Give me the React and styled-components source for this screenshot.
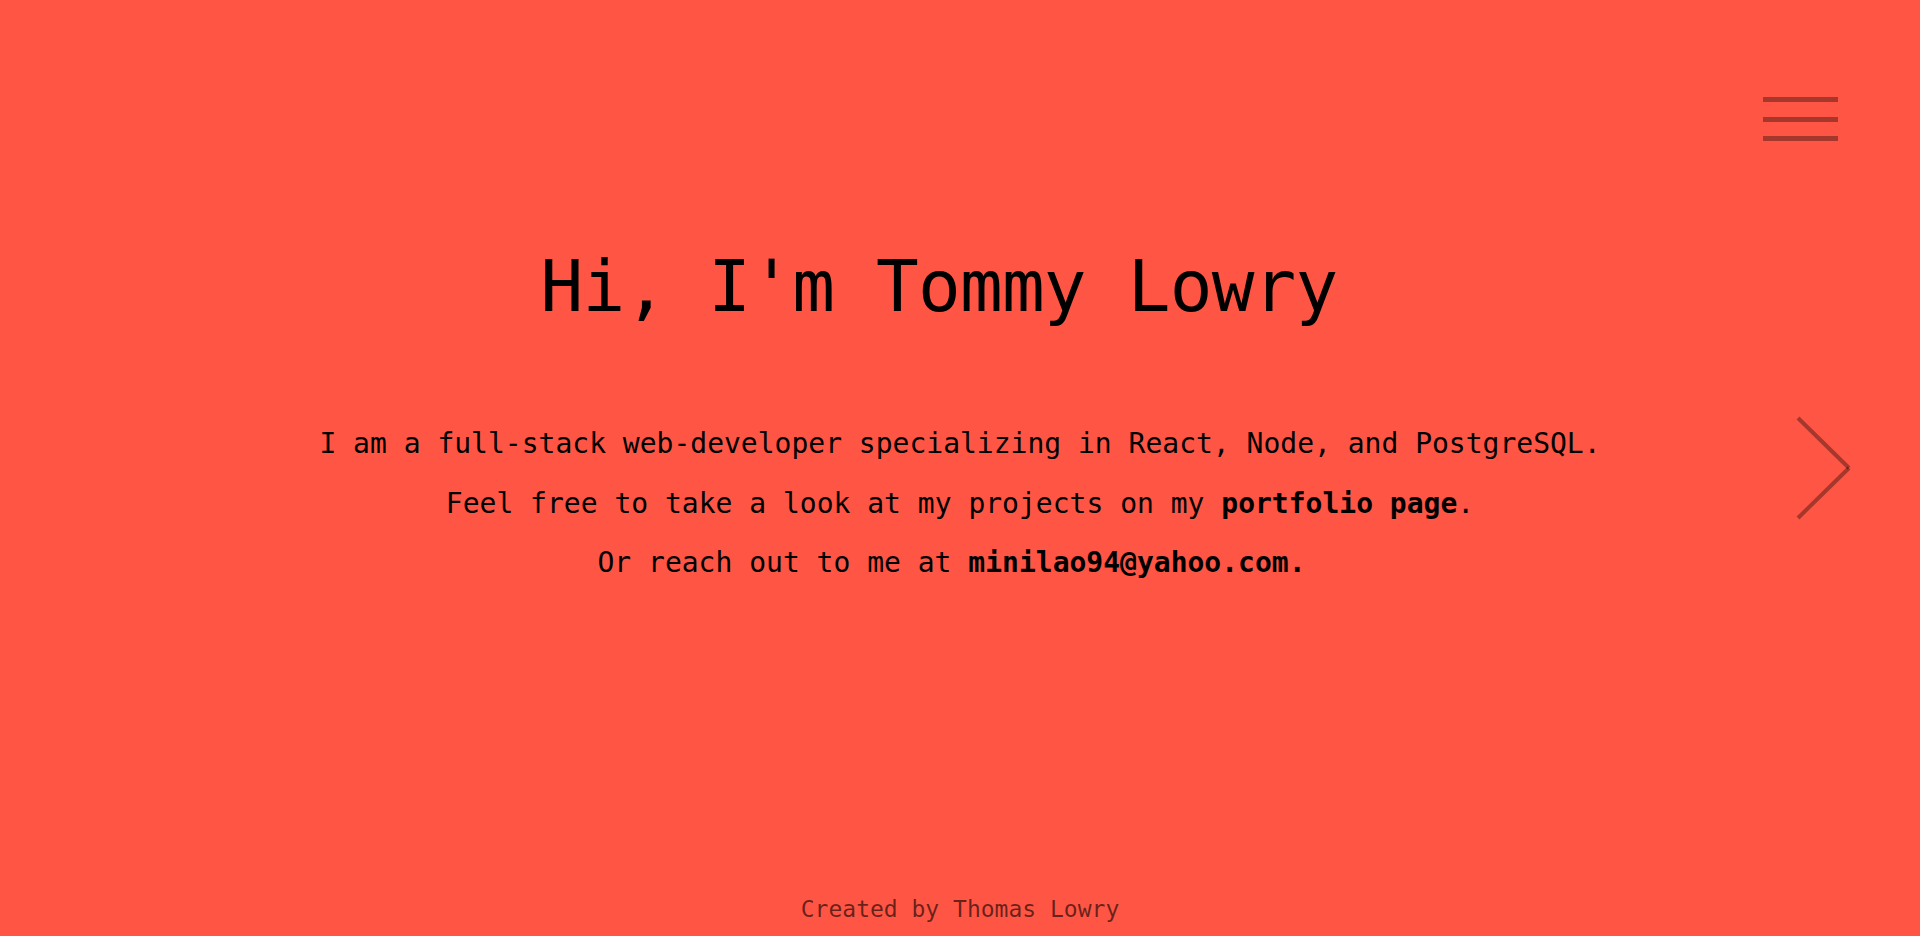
import styled, { createGlobalStyle } from "styled-components";

const GlobalStyle = createGlobalStyle`
    html, body {
        margin: 0;
        padding: 0;
        background-color: #ff5544;
    }
    body {
        font-family: "DejaVu Sans Mono", "Liberation Mono", monospace;
        color: #000;
    }
`;

const Page = styled.div`
    min-height: 100vh;
    display: flex;
    flex-direction: column;
    background-color: #ff5544;
    position: relative;
    overflow: hidden;
`;

const MenuButton = styled.button`
    position: absolute;
    top: 97px;
    right: 82px;
    width: 75px;
    padding: 0;
    border: none;
    background: none;
    display: flex;
    flex-direction: column;
    gap: 14.5px;
    cursor: pointer;
`;

const MenuLine = styled.span`
    display: block;
    height: 5px;
    width: 100%;
    background-color: rgba(0, 0, 0, 0.35);
`;

const NextArrow = styled.a`
    position: absolute;
    top: 50%;
    right: 68px;
    width: 56px;
    height: 106px;
    transform: translateY(-50%);
    display: block;
`;

const Main = styled.main`
    flex: 1;
    display: flex;
    flex-direction: column;
    align-items: center;
    padding-top: 251px;
`;

const Heading = styled.h1`
    margin: 0;
    padding-right: 42px;
    font-size: 71px;
    line-height: 71px;
    font-weight: normal;
    letter-spacing: -0.8px;
    white-space: nowrap;
`;

const Intro = styled.div`
    margin-top: 92px;
    text-align: center;
`;

const Line = styled.p`
    margin: 0;
    font-size: 28px;
    line-height: 59.5px;
    white-space: nowrap;
    padding-right: ${(p) => (p.$trail ? "17px" : "0")};
`;

const Strong = styled.a`
    font-weight: bold;
    color: #000;
    text-decoration: none;
`;

const Footer = styled.footer`
    text-align: center;
    font-size: 23px;
    line-height: 23px;
    color: rgba(0, 0, 0, 0.6);
    padding-bottom: 15px;
`;

function App() {
    return (
        <Page>
            <GlobalStyle />
            <MenuButton aria-label="menu">
                <MenuLine />
                <MenuLine />
                <MenuLine />
            </MenuButton>
            <NextArrow href="#" aria-label="next">
                <svg width="56" height="106" viewBox="0 0 56 106">
                    <line x1="2" y1="3" x2="53" y2="53" stroke="rgba(0,0,0,0.35)" strokeWidth="4" />
                    <line x1="53" y1="53" x2="2" y2="103" stroke="rgba(0,0,0,0.35)" strokeWidth="4" />
                </svg>
            </NextArrow>
            <Main>
                <Heading>Hi, I'm Tommy Lowry</Heading>
                <Intro>
                    <Line>I am a full-stack web-developer specializing in React, Node, and PostgreSQL.</Line>
                    <Line>
                        Feel free to take a look at my projects on my <Strong href="#">portfolio page</Strong>.
                    </Line>
                    <Line $trail>
                        Or reach out to me at <Strong href="#">minilao94@yahoo.com.</Strong>
                    </Line>
                </Intro>
            </Main>
            <Footer>Created by Thomas Lowry</Footer>
        </Page>
    );
}

export default App;
